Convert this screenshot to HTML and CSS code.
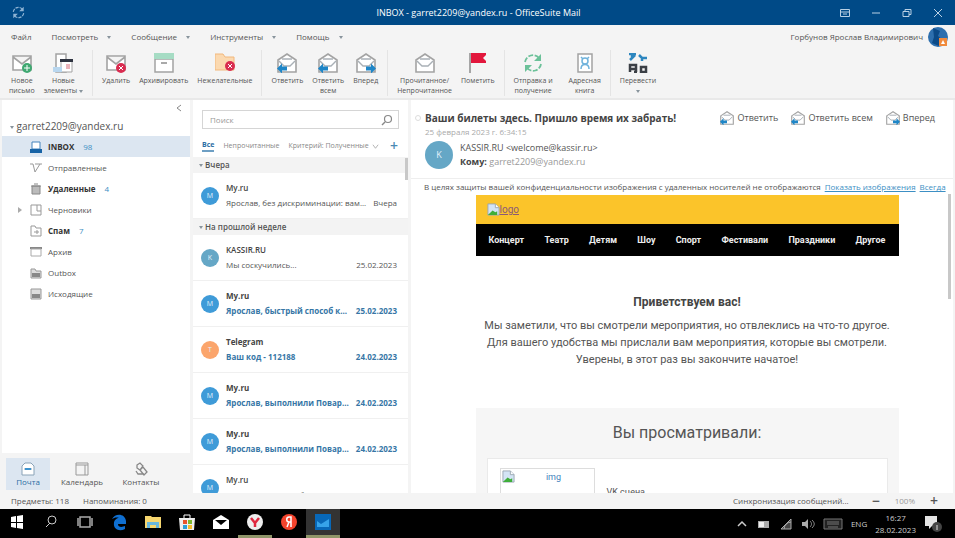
FILE: index.html
```html
<!DOCTYPE html>
<html lang="ru">
<head>
  <meta charset="UTF-8" />
  <meta name="viewport" content="width=device-width, initial-scale=1.0" />
  <title>INBOX - garret2209@yandex.ru - OfficeSuite Mail</title>
  <link rel="stylesheet" href="styles.css">
</head>
<body>
  <!-- shared icons -->
  <svg class="sprite" aria-hidden="true">
    <symbol id="i-envelope" viewBox="0 0 20 20">
      <path d="M1 3h18v14H1zM1 4l9 7 9-7" fill="#fff" stroke="#a3a3a3" stroke-width="1.6"/>
    </symbol>
    <symbol id="i-open" viewBox="0 0 20 20">
      <path d="M1 7l9-6 9 6v12H1z" fill="#fff" stroke="#a3a3a3" stroke-width="1.6"/>
      <path d="M2 8l5 5h6l5-5M5 6h10" fill="none" stroke="#a9b0b6" stroke-width="1.4"/>
    </symbol>
    <symbol id="i-reply" viewBox="0 0 20 20">
      <use href="#i-open"/>
      <path d="M0 15.500l5-5v3h5v4H5v3z" fill="#1f86c7"/>
    </symbol>
    <symbol id="i-forward" viewBox="0 0 20 20">
      <use href="#i-open"/>
      <path d="M20 15.500l-5-5v3h-5v4h5v3z" fill="#1f86c7"/>
    </symbol>
    <symbol id="i-sync" viewBox="0 0 20 20">
      <path d="M2 9a8 8 0 0 1 14-4M18 11a8 8 0 0 1-14 4" fill="none" stroke="currentColor" stroke-width="1.8" stroke-dasharray="5 1.500"/>
      <path d="M18 1v7h-7zM2 19v-7h7z" fill="currentColor"/>
    </symbol>
    <symbol id="i-broken" viewBox="0 0 14 14">
      <path d="M1 1h8l4 4v8H1z" fill="#d3e4f5" stroke="#9aa7b2"/>
      <path d="M9 1v4h4" fill="#fff" stroke="#9aa7b2"/>
      <path d="M1 13l5-5 3 2 2-1v4z" fill="#3fae3a"/>
    </symbol>
    <symbol id="i-search" viewBox="0 0 12 12">
      <path d="M1 11l3-3" stroke="currentColor" stroke-width="1.4"/>
      <circle cx="7" cy="5" r="3.500" fill="none" stroke="currentColor" stroke-width="1.200"/>
    </symbol>
  </svg>

  <header class="titlebar">
    <svg class="app-sync" viewBox="0 0 20 20"><use href="#i-sync"/></svg>
    <h1>INBOX - garret2209@yandex.ru - OfficeSuite Mail</h1>
    <div class="window-buttons">
      <button aria-label="Лента"><svg viewBox="0 0 10 10"><path d="M.5 1.500h9v7h-9zM1 4h8M3 6h4"/></svg></button>
      <button aria-label="Свернуть"><svg viewBox="0 0 10 10"><path d="M1 5h8"/></svg></button>
      <button aria-label="Развернуть"><svg viewBox="0 0 10 10"><path d="M1 3.500h6v5H1zM3 3V1.500h6v5H7"/></svg></button>
      <button aria-label="Закрыть"><svg viewBox="0 0 10 10"><path d="M1 1l8 8M9 1L1 9"/></svg></button>
    </div>
  </header>

  <nav class="menubar">
    <button>Файл</button>
    <button>Посмотреть <i class="caret"></i></button>
    <button>Сообщение <i class="caret"></i></button>
    <button>Инструменты <i class="caret"></i></button>
    <button>Помощь <i class="caret"></i></button>
    <div class="account">
      <span>Горбунов Ярослав Владимирович</span>
      <svg viewBox="0 0 22 22"><circle cx="11" cy="11" r="10" fill="#2d6fae"/><path d="M6 2l7 3-2 5 5 4-4 6-7-3 2-6z" fill="#0b4a87"/><path d="M12 12h8v8h-8z" fill="#f08a3c"/><path d="M14 18l2-4 2 4z" fill="#fff"/></svg>
    </div>
  </nav>

  <div class="toolbar">
    <div class="tool-group">
      <button class="tool"><svg viewBox="0 0 20 20"><use href="#i-envelope"/><circle cx="15" cy="15" r="5" fill="#3fa871"/><path d="M12 15h6M15 12v6" stroke="#fff"/></svg><span>Новое<br>письмо</span></button>
      <button class="tool"><svg viewBox="0 0 20 20"><path d="M3 1h10v18H3z" fill="#fff" stroke="#a3a3a3" stroke-width="1.500"/><path d="M8 8h11v11H8z" fill="#fff" stroke="#a3a3a3"/><path d="M7 6h13v3H7z" fill="#2e3340"/><path d="M13 11h4v5h-4z" fill="#eab4bb"/><path d="M0 14h9v5H0z" fill="#b9d7ef"/></svg><span>Новые<br>элементы <i class="caret"></i></span></button>
    </div>
    <div class="tool-group">
      <button class="tool"><svg viewBox="0 0 20 20"><use href="#i-envelope"/><circle cx="15" cy="15" r="5" fill="#d92c50"/><path d="M13 13l4 4M17 13l-4 4" stroke="#fff"/></svg><span>Удалить</span></button>
      <button class="tool"><svg viewBox="0 0 20 20"><path d="M1 6h18v13H1z" fill="#fff" stroke="#a3a3a3" stroke-width="1.500"/><path d="M0 0h20v6H0z" fill="#a6dcc4"/><path d="M7 10h6" stroke="#8c8c8c" stroke-width="1.500"/></svg><span>Архивировать</span></button>
      <button class="tool"><svg viewBox="0 0 20 20"><path d="M0 1h8l2 3h9v13H0z" fill="#fbd9b0" stroke="#f2b87d"/><circle cx="15" cy="13" r="5" fill="#d92c50"/><path d="M13 11l4 4M17 11l-4 4" stroke="#fff"/></svg><span>Нежелательные</span></button>
    </div>
    <div class="tool-group">
      <button class="tool"><svg viewBox="0 0 20 20"><use href="#i-reply"/></svg><span>Ответить</span></button>
      <button class="tool"><svg viewBox="0 0 20 20"><use href="#i-reply"/></svg><span>Ответить<br>всем</span></button>
      <button class="tool"><svg viewBox="0 0 20 20"><use href="#i-forward"/></svg><span>Вперед</span></button>
    </div>
    <div class="tool-group">
      <button class="tool"><svg viewBox="0 0 20 20"><use href="#i-open"/></svg><span>Прочитанное/<br>Непрочитанное</span></button>
      <button class="tool"><svg viewBox="0 0 20 20"><path d="M2 0v20" stroke="#8c8c8c" stroke-width="1.500"/><path d="M3 0h15v10H3z" fill="#e2173c"/><path d="M18 2l-3 3 3 3z" fill="#f4f4f4"/></svg><span>Пометить</span></button>
    </div>
    <div class="tool-group wide">
      <button class="tool"><svg class="green" viewBox="0 0 20 20"><use href="#i-sync"/></svg><span>Отправка и<br>получение</span></button>
      <button class="tool"><svg viewBox="0 0 20 20"><path d="M3 1h14v18H3z" fill="#fff" stroke="#a3a3a3" stroke-width="1.500"/><circle cx="10" cy="8" r="3" fill="none" stroke="#6fb2db" stroke-width="1.500"/><path d="M6 16c0-6 8-6 8 0M6 4l2 2M14 4l-2 2" fill="none" stroke="#6fb2db" stroke-width="1.500"/></svg><span>Адресная<br>книга</span></button>
    </div>
    <div class="tool-group">
      <button class="tool"><svg viewBox="0 0 20 20"><path d="M1 1h7M4 0v4M2 7l5-5M11 2l3 3h5M14 5v3" fill="none" stroke="#2d86bf" stroke-width="2.500"/><path d="M2 19v-7h6v7M2 16h6M13 19v-5h5v5zM6 19h3" fill="none" stroke="#3b3f45" stroke-width="2.500"/></svg><span>Перевести<br><i class="caret"></i></span></button>
    </div>
  </div>

  <main class="workspace">
    <aside class="sidebar">
      <div class="folders">
        <button class="collapse" aria-label="Свернуть панель"><svg viewBox="0 0 8 8"><path d="M6 1L2 4l4 3"/></svg></button>
        <button class="mailbox"><i class="caret"></i> garret2209@yandex.ru</button>
        <ul>
          <li class="active unread"><svg viewBox="0 0 12 12"><path d="M2 1h8v7H2z" fill="#fff" stroke="#4584bd"/><path d="M0 8h12v4H0z" fill="#1763a6"/></svg><a href="#">INBOX</a><b>98</b></li>
          <li><svg viewBox="0 0 12 12"><path d="M0 2h3l2 8 5-8h2M5 2h5" fill="none" stroke="#999"/></svg><a href="#">Отправленные</a></li>
          <li class="unread"><svg viewBox="0 0 12 12"><path d="M2 3h8v8H2zM1 3h10M4 1h4" fill="#bbb" stroke="#888"/></svg><a href="#">Удаленные</a><b>4</b></li>
          <li class="parent"><svg viewBox="0 0 12 12"><path d="M1 1h10v10H1zM7 1v6h4" fill="none" stroke="#999"/></svg><a href="#">Черновики</a></li>
          <li class="unread"><svg viewBox="0 0 12 12"><path d="M1 1h4l1 2h5v8H1zM4 7h5M7 5v4" fill="none" stroke="#999"/></svg><a href="#">Спам</a><b>7</b></li>
          <li><svg viewBox="0 0 12 12"><path d="M0 1h12v2H0z" fill="#888"/><path d="M1 3h10v7H1z" fill="none" stroke="#aaa"/></svg><a href="#">Архив</a></li>
          <li><svg viewBox="0 0 12 12"><path d="M1 2h4l1 2h5v7H1z" fill="#ddd" stroke="#999"/><path d="M2 6h8v4H2z" fill="#888"/></svg><a href="#">Outbox</a></li>
          <li><svg viewBox="0 0 12 12"><path d="M1 1h10v10H1z" fill="#ddd" stroke="#999"/><path d="M2 6h8v4H2z" fill="#888"/></svg><a href="#">Исходящие</a></li>
        </ul>
      </div>
      <nav class="modules">
        <button class="active"><svg viewBox="0 0 14 14"><path d="M1 4l3-3h6l3 3v9H1zM3 7h8" fill="#fff" stroke="#8aa3b8"/><path d="M4 7h6" stroke="#3c93cf" stroke-width="2"/></svg>Почта</button>
        <button><svg viewBox="0 0 14 14"><path d="M1 1h12v12H1zM1 3h12M10 3v10" fill="none" stroke="#999"/></svg>Календарь</button>
        <button><svg viewBox="0 0 14 14"><path d="M3 3l3-2 3 3-3 4-3-2zM6 8l3-3 4 5-3 3zM2 9l2 3h6" fill="none" stroke="#888" stroke-width="1.300"/></svg>Контакты</button>
      </nav>
    </aside>

    <section class="list">
      <form class="search">
        <input type="text" placeholder="Поиск" aria-label="Поиск">
        <button type="button" aria-label="Найти"><svg viewBox="0 0 12 12"><use href="#i-search"/></svg></button>
      </form>
      <div class="filters">
        <button class="active">Все</button>
        <button>Непрочитанные</button>
        <button class="criteria">Критерий: Полученные <svg viewBox="0 0 8 8"><path d="M1 2l3 4 3-4"/></svg></button>
        <button class="add" aria-label="Добавить">+</button>
      </div>
      <div class="messages">
        <h2><i class="caret"></i> Вчера</h2>
        <article>
          <span class="avatar">M</span>
          <div><h3>My.ru</h3><p><span>Ярослав, без дискриминации: вам...</span><time>Вчера</time></p></div>
        </article>
        <h2><i class="caret"></i> На прошлой неделе</h2>
        <article>
          <span class="avatar teal">K</span>
          <div><h3>KASSIR.RU</h3><p><span>Мы соскучились...</span><time>25.02.2023</time></p></div>
        </article>
        <article class="unread">
          <span class="avatar">M</span>
          <div><h3>My.ru</h3><p><span>Ярослав, быстрый способ к...</span><time>25.02.2023</time></p></div>
        </article>
        <article class="unread">
          <span class="avatar orange">T</span>
          <div><h3>Telegram</h3><p><span>Ваш код - 112188</span><time>24.02.2023</time></p></div>
        </article>
        <article class="unread">
          <span class="avatar">M</span>
          <div><h3>My.ru</h3><p><span>Ярослав, выполнили Повар...</span><time>24.02.2023</time></p></div>
        </article>
        <article class="unread">
          <span class="avatar">M</span>
          <div><h3>My.ru</h3><p><span>Ярослав, выполнили Повар...</span><time>24.02.2023</time></p></div>
        </article>
        <article>
          <span class="avatar">M</span>
          <div><h3>My.ru</h3><p><span>Ярослав, ваша подборка</span><time>24.02.2023</time></p></div>
        </article>
      </div>
    </section>

    <section class="reader">
      <header class="mail-head">
        <div class="subject-row">
          <i class="star"></i>
          <h2>Ваши билеты здесь. Пришло время их забрать!</h2>
          <div class="mail-actions">
            <button><svg viewBox="0 0 20 20"><use href="#i-reply"/></svg>Ответить</button>
            <button><svg viewBox="0 0 20 20"><use href="#i-reply"/></svg>Ответить всем</button>
            <button><svg viewBox="0 0 20 20"><use href="#i-forward"/></svg>Вперед</button>
          </div>
        </div>
        <time>25 февраля 2023 г. 6:34:15</time>
        <div class="sender">
          <span class="avatar teal big">K</span>
          <div>
            <p class="from">KASSIR.RU &lt;welcome@kassir.ru&gt;</p>
            <p class="to"><b>Кому:</b> garret2209@yandex.ru</p>
          </div>
        </div>
      </header>
      <div class="privacy">
        <span>В целях защиты вашей конфиденциальности изображения с удаленных носителей не отображаются</span>
        <a href="#">Показать изображения</a>
        <a href="#">Всегда</a>
      </div>
      <div class="mail-body">
        <div class="letter">
          <div class="banner"><a href="#"><svg viewBox="0 0 14 14"><use href="#i-broken"/></svg>logo</a></div>
          <nav class="site-nav">
            <a href="#">Концерт</a><a href="#">Театр</a><a href="#">Детям</a><a href="#">Шоу</a><a href="#">Спорт</a><a href="#">Фестивали</a><a href="#">Праздники</a><a href="#">Другое</a>
          </nav>
          <h3>Приветствуем вас!</h3>
          <p>Мы заметили, что вы смотрели мероприятия, но отвлеклись на что-то другое.<br>Для вашего удобства мы прислали вам мероприятия, которые вы смотрели.<br>Уверены, в этот раз вы закончите начатое!</p>
          <div class="viewed">
            <h4>Вы просматривали:</h4>
            <div class="card">
              <a class="thumb" href="#"><svg viewBox="0 0 14 14"><use href="#i-broken"/></svg><span>img</span></a>
              <div class="event">VK сцена</div>
            </div>
          </div>
        </div>
      </div>
    </section>
  </main>

  <footer class="statusbar">
    <span>Предметы: 118</span>
    <span>Напоминания: 0</span>
    <span class="sync">Синхронизация сообщений...</span>
    <button aria-label="Уменьшить">−</button>
    <span class="zoom">100%</span>
    <button aria-label="Увеличить">+</button>
  </footer>

  <div class="taskbar">
    <button aria-label="Пуск"><svg viewBox="0 0 18 18"><path d="M3 4l5-1v6H3zM9 3l6-1v7H9zM3 10h5v5l-5-1zM9 10h6v6l-6-1z" fill="#fff"/></svg></button>
    <button aria-label="Поиск"><svg viewBox="0 0 18 18"><path d="M4 14l4-4" stroke="#ccc"/><circle cx="10" cy="7" r="4" fill="none" stroke="#ccc"/></svg></button>
    <button aria-label="Представление задач"><svg viewBox="0 0 18 18"><path d="M4 4h10v10H4zM2 5v8M16 5v8" fill="none" stroke="#aaa" stroke-width="1.500"/></svg></button>
    <button aria-label="Edge"><svg viewBox="0 0 18 18"><path d="M2 6c3-6 13-6 14 2v3H8c0 4 5 3 7 2v3c-6 3-12 0-11-6 0-3 3-5 5-5-3-1-5 0-7 1z" fill="#0f6fd1"/></svg></button>
    <button aria-label="Проводник"><svg viewBox="0 0 18 18"><path d="M1 3h6l1 1h9v11H1z" fill="#f6d66f"/><path d="M3 9h12v6H3z" fill="#68b7dd"/><path d="M6 12h6v3H6z" fill="#f6d66f"/></svg></button>
    <button aria-label="Магазин"><svg viewBox="0 0 18 18"><path d="M6 5V2h6v3" fill="none" stroke="#fff"/><path d="M1 5h16l-1 12H2z" fill="#eee"/><path d="M5 7h4v4H5z" fill="#e8532b"/><path d="M10 7h4v4h-4z" fill="#7cb82f"/><path d="M5 12h4v4H5z" fill="#2c9fd8"/><path d="M10 12h4v4h-4z" fill="#f5bd2c"/></svg></button>
    <button aria-label="Почта"><svg viewBox="0 0 18 18"><path d="M1 7l8-5 8 5v9H1z" fill="#fff"/><path d="M3 7h12l-6 5z" fill="#000"/></svg></button>
    <button class="open" aria-label="Браузер"><svg viewBox="0 0 18 18"><circle cx="9" cy="9" r="8" fill="#eee"/><path d="M5 5l4 5 4-5M9 9v5" fill="none" stroke="#e0273f" stroke-width="2.500"/></svg></button>
    <button aria-label="Яндекс"><svg viewBox="0 0 18 18"><circle cx="9" cy="9" r="8" fill="#f4432c"/><path d="M11 14V4H9c-3 0-3 5 0 5h2M9 9l-2 5" fill="none" stroke="#fff" stroke-width="1.500"/></svg></button>
    <button class="open current" aria-label="OfficeSuite Mail"><svg viewBox="0 0 18 18"><path d="M1 1h16v16H1z" fill="#0868b8"/><path d="M3 8l4 3 8-5v8H3z" fill="#36a3ea"/></svg></button>
    <div class="tray">
      <svg viewBox="0 0 14 14"><path d="M3 9l4-4 4 4" fill="none" stroke="#ccc" stroke-width="1.500"/></svg>
      <svg viewBox="0 0 14 14"><path d="M1 4h11v7H1z" fill="#aaa"/><path d="M2 5h5v5H2z" fill="#eee"/></svg>
      <svg viewBox="0 0 14 14"><path d="M2 12L12 2v10zM5 12a8 8 0 0 1 7-7" fill="#444" stroke="#aaa"/></svg>
      <svg viewBox="0 0 14 14"><path d="M1 5h3l3-3v10l-3-3H1z" fill="#aaa"/><path d="M9 4c2 2 2 4 0 6M11 3c3 3 3 5 0 8" fill="none" stroke="#888"/></svg>
      <svg class="keyboard" viewBox="0 0 20 14"><path d="M1 2h18v10H1zM4 5h12M4 7h12M5 10h10" fill="#222" stroke="#777"/></svg>
      <span>ENG</span>
      <div class="clock">16:27<br>28.02.2023</div>
      <svg class="notify" viewBox="0 0 18 18"><path d="M1 1h12v10H8l-3 3v-3H1z" fill="#e4e4e4"/><circle cx="13" cy="12" r="5" fill="#444"/><path d="M13 10v5" stroke="#ddd"/></svg>
    </div>
  </div>
</body>
</html>
```

FILE: styles.css
```css
* {
  box-sizing: border-box;
}

body {
  margin: 0;
  height: 100vh;
  display: flex;
  flex-direction: column;
  overflow: hidden;
  font-family: "Open Sans", "Noto Sans", sans-serif;
  font-size: 8px;
  line-height: 10px;
  color: #555;
  background: #f4f4f4;
}

h1, h2, h3, h4, p, ul {
  margin: 0;
  padding: 0;
}

button {
  border: 0;
  padding: 0;
  background: none;
  font: inherit;
  color: inherit;
  white-space: nowrap;
  cursor: pointer;
}

svg {
  display: block;
  flex: none;
}

.sprite {
  position: absolute;
  width: 0;
  height: 0;
}

.caret {
  display: inline-block;
  border: 2px solid transparent;
  border-top: 3px solid #88949c;
  border-bottom: 0;
  vertical-align: middle;
}

/* title bar */
.titlebar {
  flex: none;
  display: flex;
  align-items: center;
  height: 25px;
  padding: 0 12px;
  background: #004a87;
  color: #fff;
}

.app-sync {
  width: 13px;
  height: 13px;
  color: #8fb4d4;
}

.titlebar h1 {
  flex: 1;
  padding-left: 92px;
  text-align: center;
  font-size: 9px;
  font-weight: 400;
}

.window-buttons {
  display: flex;
  gap: 21px;
}

.window-buttons svg {
  width: 10px;
  height: 10px;
  fill: none;
  stroke: #b9d0e4;
}

/* menu */
.menubar {
  flex: none;
  display: flex;
  align-items: center;
  gap: 20px;
  height: 23px;
  padding: 0 6px 0 11px;
}

.menubar .caret {
  margin-left: 7px;
}

.account {
  display: flex;
  align-items: center;
  gap: 4px;
  margin-left: auto;
}

.account svg {
  width: 22px;
  height: 22px;
}

/* toolbar */
.toolbar {
  flex: none;
  display: flex;
  height: 52px;
  padding: 2px 0;
  border-bottom: 2px solid #e9e9e9;
}

.tool-group {
  display: flex;
  gap: 1px;
  padding: 0 5px;
  border-right: 1px solid #e4e4e4;
}

.tool-group.wide {
  gap: 8px;
}

.tool-group:last-child {
  border-right: 0;
}

.tool {
  display: flex;
  flex-direction: column;
  align-items: center;
  padding: 3px 4px 0;
  font-size: 7px;
  text-align: center;
}

.tool svg {
  width: 20px;
  height: 20px;
  margin-bottom: 3px;
}

.green {
  color: #6bc199;
}

/* workspace */
.workspace {
  flex: 1;
  min-height: 0;
  display: flex;
  gap: 3px;
  padding: 0 2px;
}

.sidebar {
  width: 188px;
  flex: none;
  display: flex;
  flex-direction: column;
}

.folders {
  flex: 1;
  display: flex;
  flex-direction: column;
  background: #fff;
}

.collapse {
  align-self: flex-end;
  margin: 4px 7px;
}

.collapse svg {
  width: 8px;
  height: 8px;
  fill: none;
  stroke: #888;
}

.mailbox {
  height: 20px;
  padding-left: 8px;
  font-size: 10px;
  text-align: left;
}

.folders ul {
  list-style: none;
}

.folders li {
  display: flex;
  align-items: center;
  gap: 6px;
  height: 21px;
  padding-left: 28px;
}

.folders li svg {
  width: 12px;
  height: 12px;
}

.folders li a {
  color: inherit;
  text-decoration: none;
}

.folders li b {
  margin-left: 3px;
  font-weight: 400;
  color: #3c8fc4;
}

.folders .active {
  background: #dce6f1;
}

.folders .unread a {
  font-weight: 700;
  color: #333;
}

.folders .parent::before {
  content: "";
  border: 3px solid transparent;
  border-left: 4px solid #aaa;
  border-right: 0;
  margin: 0 2px 0 -12px;
}

.modules {
  display: flex;
  gap: 5px;
  height: 40px;
  padding: 5px 4px 3px;
}

.modules button {
  display: flex;
  flex-direction: column;
  align-items: center;
  justify-content: center;
  gap: 1px;
  width: 54px;
}

.modules .active {
  width: 44px;
  background: #dce6f1;
  color: #2c6da4;
}

.modules svg {
  width: 14px;
  height: 14px;
}

/* message list */
.list {
  width: 215px;
  flex: none;
  display: flex;
  flex-direction: column;
  background: #fff;
}

.search {
  display: flex;
  align-items: center;
  height: 19px;
  margin: 10px 9px 0;
  border: 1px solid #d5d5d5;
}

.search input {
  flex: 1;
  min-width: 0;
  border: 0;
  padding: 0 7px;
  background: none;
  font: inherit;
}

.search input::placeholder {
  color: #999;
}

.search svg {
  width: 12px;
  height: 12px;
  margin-right: 5px;
  color: #888;
}

.filters {
  display: flex;
  align-items: center;
  gap: 9px;
  height: 28px;
  padding: 6px 10px 0 9px;
  font-size: 7px;
  color: #888;
}

.filters .active {
  border-bottom: 2px solid #6e9fc4;
  font-weight: 700;
  color: #2c6da4;
}

.criteria {
  display: flex;
  align-items: center;
  gap: 3px;
}

.criteria svg {
  width: 7px;
  height: 7px;
  fill: none;
  stroke: #aaa;
}

.filters .add {
  margin-left: auto;
  font-size: 14px;
  font-weight: 600;
  color: #4b89b3;
}

.messages {
  position: relative;
  flex: 1;
  min-height: 0;
  overflow: hidden;
}

.messages::after,
.reader::after {
  content: "";
  position: absolute;
  top: 1px;
  right: 0;
  width: 3px;
  height: 22px;
  background: #c8c8c8;
}

.messages h2 {
  height: 16px;
  padding: 0 6px;
  background: #f3f3f3;
  font-size: 8px;
  line-height: 16px;
  font-weight: 600;
}

.messages article {
  display: flex;
  align-items: center;
  gap: 7px;
  height: 46px;
  padding: 0 11px 0 8px;
  border-bottom: 1px solid #f0f0f0;
}

.avatar {
  flex: none;
  width: 18px;
  height: 18px;
  border-radius: 50%;
  background: #3f9bd8;
  color: #e3f1fa;
  font-size: 7px;
  line-height: 18px;
  text-align: center;
}

.avatar.teal {
  background: #65a7c6;
}

.avatar.orange {
  background: #fba56c;
}

.messages article div {
  flex: 1;
  min-width: 0;
}

.messages h3 {
  margin-bottom: 5px;
  font-size: 8px;
  font-weight: 600;
  color: #444;
}

.messages p {
  display: flex;
  justify-content: space-between;
  white-space: nowrap;
}

.messages .unread h3 {
  font-weight: 700;
}

.messages .unread p {
  font-weight: 700;
  color: #3676a6;
}

/* reading pane */
.reader {
  position: relative;
  flex: 1;
  min-width: 0;
  display: flex;
  flex-direction: column;
  background: #fff;
}

.reader::after {
  top: 94px;
  right: 2px;
  height: 105px;
}

.mail-head {
  flex: none;
  height: 79px;
  padding: 9px 18px 0 14px;
  border-bottom: 1px solid #eee;
}

.mail-head time {
  display: block;
  line-height: 12px;
  color: #aaa;
}

.subject-row {
  display: flex;
  align-items: center;
  height: 17px;
}

.star {
  width: 6px;
  height: 6px;
  margin: 0 4px 0 -10px;
  border: 1px solid #ddd;
  border-radius: 50%;
}

.subject-row h2 {
  font-size: 10px;
  font-weight: 700;
  color: #444;
}

.mail-actions {
  display: flex;
  gap: 13px;
  margin-left: auto;
  font-size: 9px;
}

.mail-actions button {
  display: flex;
  align-items: center;
  gap: 3px;
}

.mail-actions svg {
  width: 14px;
  height: 14px;
}

.sender {
  display: flex;
  align-items: center;
  gap: 7px;
  margin-top: 3px;
  font-size: 9px;
  line-height: 14px;
}

.avatar.big {
  width: 28px;
  height: 28px;
  font-size: 9px;
  line-height: 28px;
}

.to {
  color: #999;
}

.to b {
  color: #444;
}

.privacy {
  flex: none;
  display: flex;
  gap: 4px;
  height: 16px;
  padding-left: 13px;
  line-height: 15px;
  white-space: nowrap;
}

.privacy a {
  color: #3c8fc4;
}

.mail-body {
  flex: 1;
  min-height: 0;
  overflow: hidden;
  padding: 0 4px 0 14px;
}

.letter {
  max-width: 423px;
  margin: 0 auto;
  font-family: Roboto, "Open Sans", sans-serif;
  text-align: center;
}

.banner {
  display: flex;
  height: 29px;
  padding: 7px 11px;
  background: #fbc42a;
}

.banner a {
  display: flex;
  align-items: center;
  font-size: 10px;
  color: #8a5a78;
}

.banner svg {
  width: 13px;
  height: 13px;
}

.site-nav {
  display: flex;
  justify-content: space-between;
  height: 32px;
  padding: 0 13px;
  background: #000;
  line-height: 32px;
}

.site-nav a {
  font-size: 9px;
  font-weight: 700;
  color: #eee;
  text-decoration: none;
}

.letter h3 {
  margin: 38px 0 7px;
  font-size: 12px;
  line-height: 16px;
  color: #444;
}

.letter p {
  font-size: 11px;
  line-height: 17px;
  white-space: nowrap;
}

.viewed {
  margin-top: 40px;
  padding: 12px 11px;
  background: #f6f6f6;
}

.viewed h4 {
  margin-bottom: 13px;
  font-size: 16px;
  line-height: 25px;
  font-weight: 400;
}

.card {
  display: flex;
  gap: 12px;
  height: 160px;
  padding: 9px 12px;
  border: 1px solid #eaeaea;
  background: #fff;
}

.thumb {
  display: flex;
  width: 95px;
  padding: 1px;
  border: 1px solid #ddd;
  font-size: 9px;
  line-height: 14px;
  color: #4584bd;
  text-decoration: none;
}

.thumb svg {
  width: 13px;
  height: 13px;
}

.thumb span {
  flex: 1;
}

.event {
  padding-top: 17px;
  font-size: 9px;
  line-height: 14px;
}

/* status bar */
.statusbar {
  flex: none;
  display: flex;
  align-items: center;
  gap: 14px;
  height: 16px;
  padding: 0 16px 0 11px;
}

.sync {
  margin: 0 8px 0 auto;
}

.statusbar button {
  width: 10px;
  font-size: 14px;
  font-weight: 600;
}

.zoom {
  color: #999;
}

/* windows taskbar */
.taskbar {
  flex: none;
  display: flex;
  height: 29px;
  background: #000;
  color: #ccc;
}

.taskbar > button {
  display: flex;
  align-items: center;
  justify-content: center;
  width: 34px;
  border-bottom: 3px solid transparent;
}

.taskbar > button svg {
  width: 18px;
  height: 18px;
}

.taskbar > .open {
  border-bottom-color: #8f9569;
}

.taskbar > .current {
  background: #333;
}

.tray {
  display: flex;
  align-items: center;
  gap: 8px;
  margin-left: auto;
  padding-right: 13px;
}

.tray svg {
  width: 14px;
  height: 14px;
}

.tray .keyboard {
  width: 20px;
}

.tray .notify {
  width: 18px;
  height: 18px;
}

.clock {
  line-height: 12px;
  text-align: center;
}
```
